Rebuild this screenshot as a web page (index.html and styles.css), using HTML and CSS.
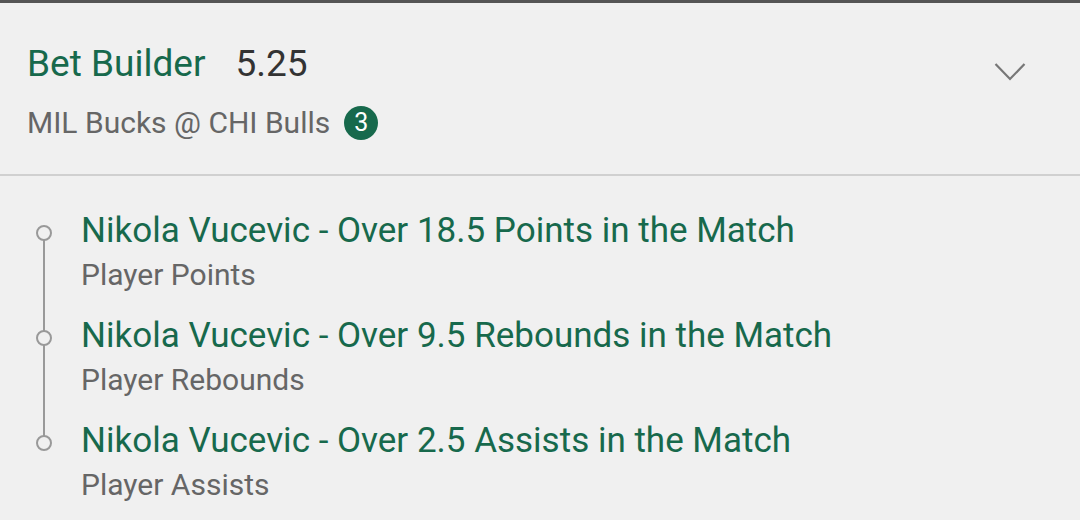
FILE: index.html
```html
<!DOCTYPE html>
<html lang="en">
<head>
    <meta charset="UTF-8">
    <meta name="viewport" content="width=device-width, initial-scale=1.0">
    <title>Bet Builder</title>
    <link rel="stylesheet" href="styles.css">
</head>
<body>
    <div class="card">
        <div class="card-header">
            <div class="header-text">
                <div class="title-row">
                    <span class="title">Bet Builder</span>
                    <span class="odds">5.25</span>
                </div>
                <div class="match-row">
                    <span class="match">MIL Bucks @ CHI Bulls</span>
                    <span class="badge">3</span>
                </div>
            </div>
            <svg class="chevron" width="32" height="20" viewBox="0 0 32 20">
                <path d="M1.5 2 L16 17 L30.5 2" fill="none" stroke="#777" stroke-width="2.2"/>
            </svg>
        </div>

        <ul class="legs">
            <li class="leg">
                <span class="dot"></span>
                <div class="leg-name">Nikola Vucevic - Over 18.5 Points in the Match</div>
                <div class="leg-market">Player Points</div>
            </li>
            <li class="leg">
                <span class="dot"></span>
                <div class="leg-name">Nikola Vucevic - Over 9.5 Rebounds in the Match</div>
                <div class="leg-market">Player Rebounds</div>
            </li>
            <li class="leg">
                <span class="dot"></span>
                <div class="leg-name">Nikola Vucevic - Over 2.5 Assists in the Match</div>
                <div class="leg-market">Player Assists</div>
            </li>
        </ul>
    </div>
</body>
</html>
```

FILE: styles.css
```css
body {
    margin: 0;
    background-color: #f0f0f0;
    font-family: Roboto, "Noto Sans", sans-serif;
}
.card {
    border-top: 3px solid #555;
    height: 517px;
    overflow: hidden;
}
.card-header {
    display: flex;
    justify-content: space-between;
    align-items: flex-start;
    padding: 39px 54px 0 27px;
    height: 132px;
    border-bottom: 2px solid #d0d0d0;
}
.title-row {
    display: flex;
    align-items: baseline;
    gap: 30px;
    line-height: 44px;
}
.title {
    color: #17694c;
    font-size: 37px;
}
.odds {
    color: #333;
    font-size: 37px;
}
.match-row {
    display: flex;
    align-items: center;
    gap: 14px;
    margin-top: 19px;
    line-height: 36px;
}
.match {
    color: #666;
    font-size: 30px;
}
.badge {
    width: 34px;
    height: 34px;
    border-radius: 50%;
    background-color: #17694c;
    color: #fff;
    font-size: 25px;
    line-height: 34px;
    text-align: center;
}
.chevron {
    margin-top: 20px;
}
.legs {
    list-style: none;
    margin: 0;
    padding: 35px 0 0 81px;
    position: relative;
}
.legs::before {
    content: "";
    position: absolute;
    left: 43px;
    top: 57px;
    height: 207px;
    width: 2px;
    background-color: #999;
}
.leg {
    position: relative;
    height: 105px;
}
.leg-name {
    color: #17694c;
    font-size: 35px;
    line-height: 40px;
}
.leg-market {
    color: #666;
    font-size: 30px;
    line-height: 48px;
}
.dot {
    position: absolute;
    left: -45px;
    top: 14px;
    width: 12px;
    height: 12px;
    border: 2px solid #999;
    border-radius: 50%;
    background-color: #f0f0f0;
    z-index: 1;
}
```
